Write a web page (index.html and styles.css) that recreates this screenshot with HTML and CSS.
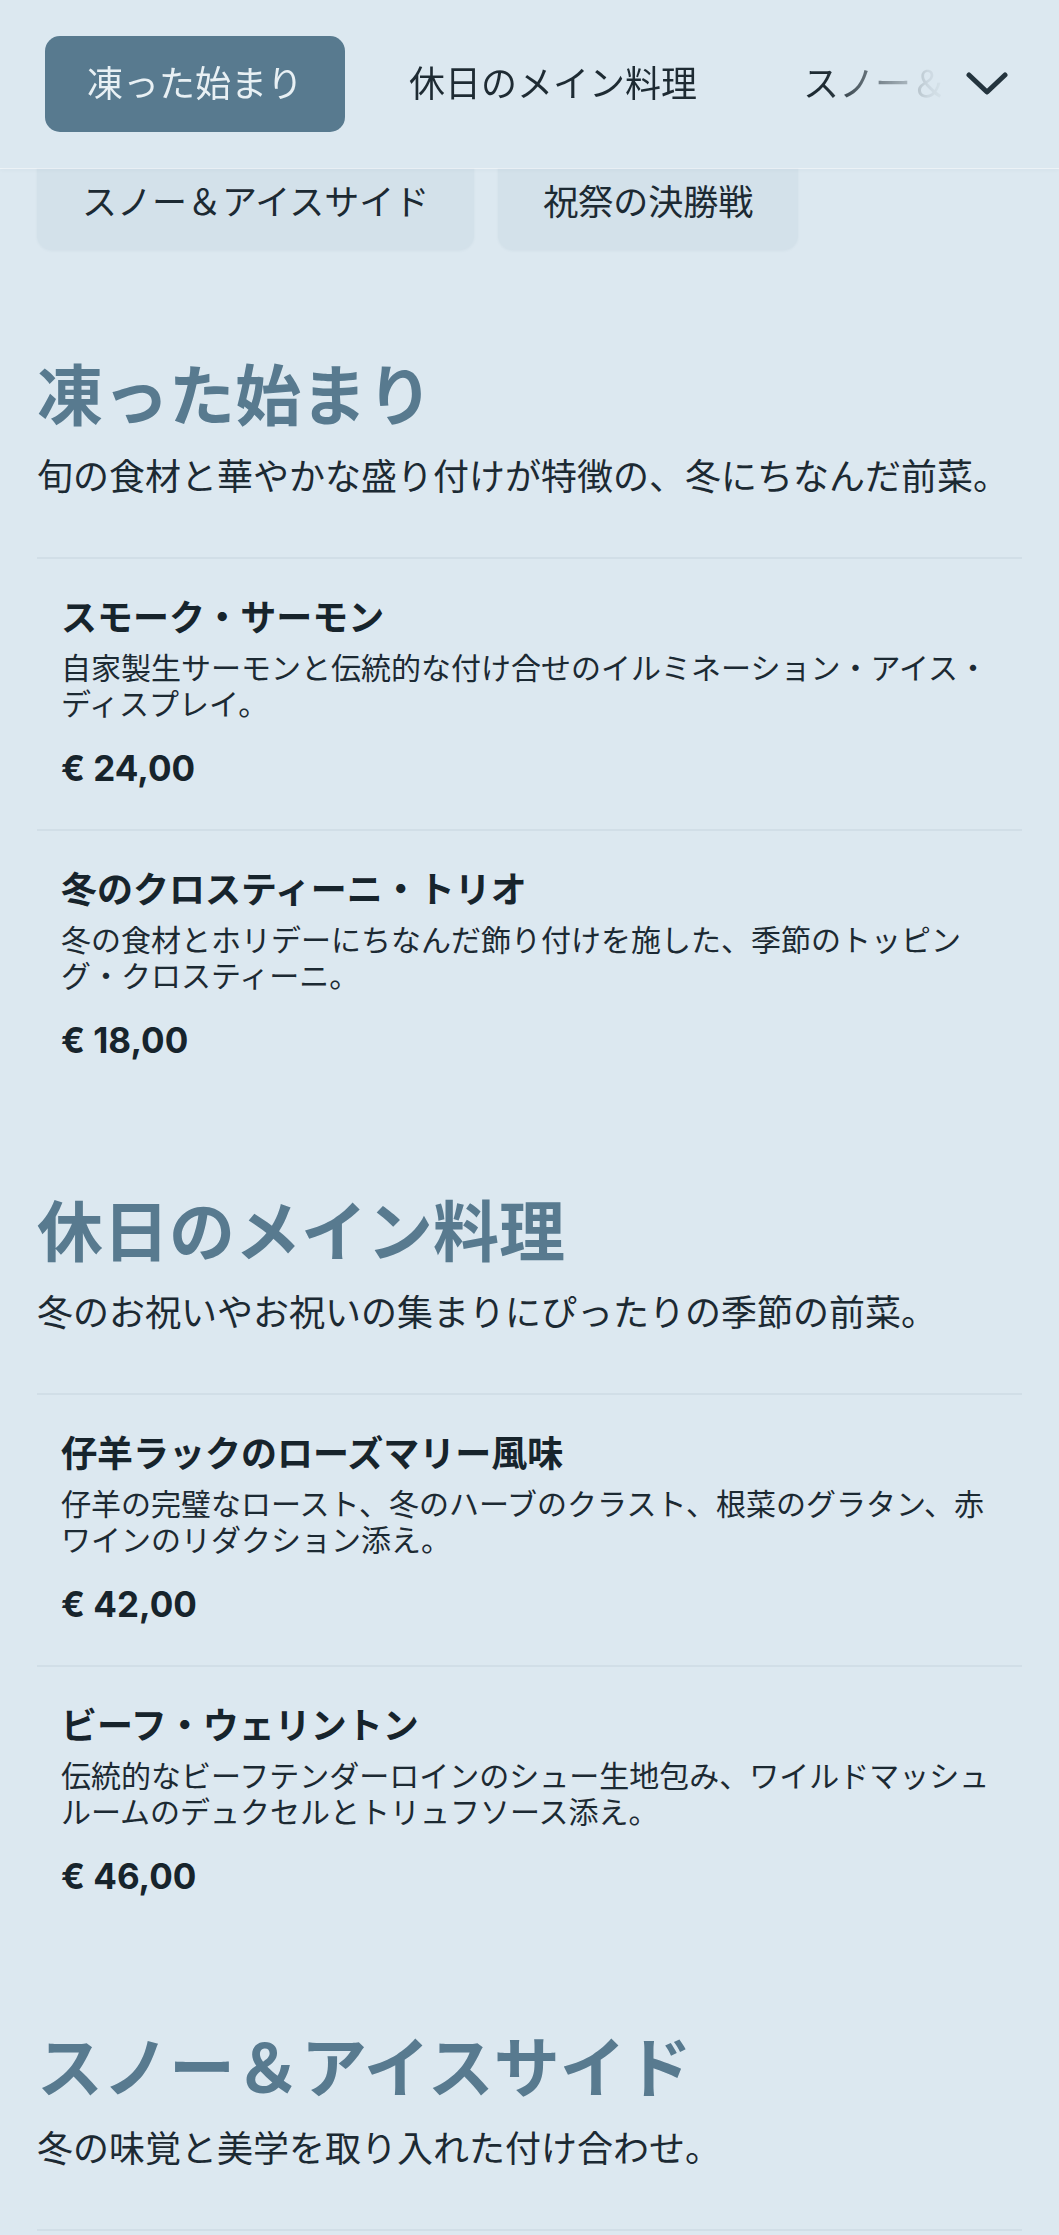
FILE: index.html
```html
<!DOCTYPE html>
<html lang="ja">
<head>
    <meta charset="UTF-8">
    <meta name="viewport" content="width=device-width, initial-scale=1.0">
    <title>冬のメニュー</title>
    <link rel="stylesheet" href="styles.css">
</head>
<body>

    <header class="topbar">
        <nav class="tabs">
            <a class="tab active" href="#frozen">凍った始まり</a>
            <a class="tab" href="#holiday">休日のメイン料理</a>
            <a class="tab" href="#sides">スノー＆アイスサイド</a>
            <a class="tab" href="#finale">祝祭の決勝戦</a>
        </nav>
        <button class="toggle" aria-label="すべてのカテゴリ">
            <svg width="42" height="26" viewBox="0 0 42 26">
                <polyline points="3,4 21,21 39,4"></polyline>
            </svg>
        </button>
    </header>

    <div class="chips">
        <a class="chip" href="#sides">スノー＆アイスサイド</a>
        <a class="chip" href="#finale">祝祭の決勝戦</a>
    </div>

    <main class="menu">

        <section class="category" id="frozen">
            <h2>凍った始まり</h2>
            <p class="intro">旬の食材と華やかな盛り付けが特徴の、冬にちなんだ前菜。</p>
            <div class="items">
                <div class="item">
                    <h3>スモーク・サーモン</h3>
                    <p class="desc">自家製生サーモンと伝統的な付け合せのイルミネーション・アイス・ディスプレイ。</p>
                    <div class="price">€ 24,00</div>
                </div>
                <div class="item">
                    <h3>冬のクロスティーニ・トリオ</h3>
                    <p class="desc">冬の食材とホリデーにちなんだ飾り付けを施した、季節のトッピング・クロスティーニ。</p>
                    <div class="price">€ 18,00</div>
                </div>
            </div>
        </section>

        <section class="category" id="holiday">
            <h2>休日のメイン料理</h2>
            <p class="intro">冬のお祝いやお祝いの集まりにぴったりの季節の前菜。</p>
            <div class="items">
                <div class="item">
                    <h3>仔羊ラックのローズマリー風味</h3>
                    <p class="desc">仔羊の完璧なロースト、冬のハーブのクラスト、根菜のグラタン、赤ワインのリダクション添え。</p>
                    <div class="price">€ 42,00</div>
                </div>
                <div class="item">
                    <h3>ビーフ・ウェリントン</h3>
                    <p class="desc">伝統的なビーフテンダーロインのシュー生地包み、ワイルドマッシュルームのデュクセルとトリュフソース添え。</p>
                    <div class="price">€ 46,00</div>
                </div>
            </div>
        </section>

        <section class="category" id="sides">
            <h2>スノー＆アイスサイド</h2>
            <p class="intro">冬の味覚と美学を取り入れた付け合わせ。</p>
            <div class="items">
                <div class="item">
                    <h3>トリュフ・ポテトピュレ</h3>
                    <p class="desc">なめらかなポテトピュレに黒トリュフを削りかけて。</p>
                    <div class="price">€ 12,00</div>
                </div>
            </div>
        </section>

        <section class="category" id="finale">
            <h2>祝祭の決勝戦</h2>
            <p class="intro">冬の夜を締めくくる季節のデザート。</p>
        </section>

    </main>

</body>
</html>
```

FILE: styles.css
```css
body {
    margin: 0;
    background-color: #dce8f0;
    color: #1c2a33;
    font-family: Inter, "Noto Sans CJK JP", sans-serif;
}
a {
    color: inherit;
    text-decoration: none;
}

/* sticky category bar */
.topbar {
    position: sticky;
    top: 0;
    z-index: 2;
    display: flex;
    align-items: center;
    gap: 15px;
    padding: 36px 51px 36px 45px;
    background-color: #dce8f0;
    box-shadow: 0 1px 0 rgba(255, 255, 255, 0.55), 0 2px 4px rgba(40, 70, 90, 0.04);
}
.tabs {
    flex: 1;
    display: flex;
    gap: 22px;
    overflow: hidden;
    -webkit-mask-image: linear-gradient(to right, #000 calc(100% - 125px), rgba(0, 0, 0, 0.08) calc(100% - 22px), transparent);
    mask-image: linear-gradient(to right, #000 calc(100% - 125px), rgba(0, 0, 0, 0.08) calc(100% - 22px), transparent);
}
.tab {
    flex: none;
    height: 96px;
    line-height: 96px;
    padding: 0 42px;
    border-radius: 15px;
    font-size: 36px;
    white-space: nowrap;
    color: #1e2b33;
}
.tab.active {
    background-color: #587a8f;
    color: #e8f0f4;
}
.toggle {
    flex: none;
    width: 42px;
    height: 42px;
    padding: 0;
    border: none;
    background: none;
    display: flex;
    align-items: center;
    justify-content: center;
}
.toggle polyline {
    fill: none;
    stroke: #24343e;
    stroke-width: 5;
    stroke-linecap: round;
    stroke-linejoin: round;
}

/* expanded category list, partly under the bar */
.chips {
    display: flex;
    flex-wrap: wrap;
    gap: 24px;
    margin-top: -14px;
    padding: 0 37px;
}
.chip {
    height: 96px;
    line-height: 96px;
    padding: 0 45px;
    border-radius: 15px;
    background-color: #d3e1ea;
    box-shadow: 0 1px 3px rgba(40, 70, 90, 0.05);
    font-size: 35px;
    white-space: nowrap;
}

/* menu */
.menu {
    padding: 15px 37px 60px;
}
.category {
    margin-top: 90px;
}
.category h2 {
    margin: 0;
    font-size: 66px;
    line-height: 83px;
    font-weight: 700;
    color: #587a8f;
}
.intro {
    margin: 15px 0 0;
    font-size: 36px;
    line-height: 49px;
}
.items {
    margin-top: 55px;
}
.item {
    border-top: 2px solid #d1dee7;
    padding: 36px 24px 38px;
}
.item h3 {
    margin: 0;
    font-size: 36px;
    line-height: 46px;
    font-weight: 700;
    color: #17242c;
}
.desc {
    margin: 9px 0 0;
    font-size: 30px;
    line-height: 36px;
}
.price {
    margin-top: 23px;
    font-size: 35px;
    line-height: 46px;
    font-weight: 700;
    color: #17242c;
}
```
